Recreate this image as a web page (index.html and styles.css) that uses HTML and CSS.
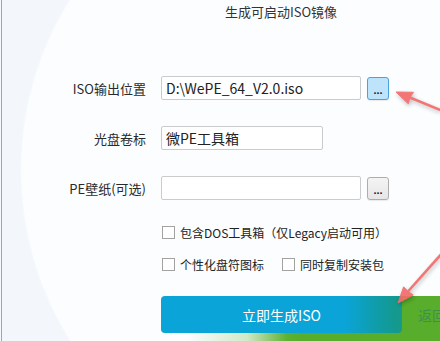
FILE: index.html
```html
<!DOCTYPE html>
<html lang="zh-CN">
<head>
<meta charset="utf-8">
<title>生成可启动ISO镜像</title>
<link rel="stylesheet" href="styles.css">
</head>
<body>
<div class="window">
  <div class="content">
    <h1 class="title">生成可启动ISO镜像</h1>
    <div class="row row-first">
      <label class="label">ISO输出位置</label>
      <div class="input input-wide">D:\WePE_64_V2.0.iso</div>
      <button class="browse browse-active">...</button>
    </div>
    <div class="row">
      <label class="label">光盘卷标</label>
      <div class="input input-short">微PE工具箱</div>
    </div>
    <div class="row">
      <label class="label">PE壁纸(可选)</label>
      <div class="input input-wide"></div>
      <button class="browse">...</button>
    </div>
    <div class="check-row check-row-first">
      <span class="check"><span class="box"></span>包含DOS工具箱（仅Legacy启动可用）</span>
    </div>
    <div class="check-row">
      <span class="check check-gap"><span class="box"></span>个性化盘符图标</span>
      <span class="check"><span class="box"></span>同时复制安装包</span>
    </div>
    <div class="actions">
      <button class="primary">立即生成ISO</button>
      <button class="secondary">返回</button>
    </div>
  </div>
  <svg class="arrows" width="440" height="341" viewBox="0 0 440 341">
    <g fill="#f26b6b" stroke="#f26b6b" stroke-linejoin="round">
      <line x1="405" y1="95.5" x2="444" y2="111.5" stroke-width="2.6"/>
      <polygon points="396,92 413.5,92.3 409.8,97.6 408.3,103.8" stroke-width="1"/>
      <line x1="404" y1="296" x2="444" y2="251" stroke-width="2.6"/>
      <polygon points="398,303 403.6,286.8 408.2,291.5 413.2,295" stroke-width="1"/>
    </g>
  </svg>
</div>
</body>
</html>
```

FILE: styles.css
```css
* { box-sizing: border-box; }

html, body {
  margin: 0;
  padding: 0;
  background: #f5f9fc;
}

body {
  font-family: "Noto Sans CJK SC", "Noto Sans", sans-serif;
  color: #333;
}

.window {
  position: relative;
  width: 439px;
  height: 341px;
  margin-left: 1px;
  border-left: 1px solid #a3a6a9;
  overflow: hidden;
  background: radial-gradient(circle at 340px 170px, #fbfdff 0, #fbfdff 320px, #f3f7fb 322px);
}

.content {
  display: flex;
  flex-direction: column;
}

.title {
  margin: 0 0 0 159px;
  width: 240px;
  height: 24px;
  line-height: 24px;
  font-size: 13px;
  font-weight: normal;
  text-align: center;
  color: #333;
}

.row {
  display: flex;
  align-items: center;
  height: 24px;
  margin-top: 26px;
}

.row-first {
  margin-top: 52px;
}

.label {
  width: 144px;
  margin-right: 15px;
  text-align: right;
  font-size: 13px;
  color: #2a2a2a;
}

.input {
  height: 24px;
  line-height: 22px;
  padding-left: 4px;
  background: #fff;
  border: 1px solid #c9cbcd;
  border-radius: 2px;
  font-size: 14px;
  color: #222;
}

.input-wide { width: 200px; }
.input-short { width: 162px; }

.browse {
  width: 22px;
  height: 23px;
  margin-left: 6px;
  padding: 0 0 3px;
  border: 1px solid #adadad;
  border-radius: 3px;
  background: linear-gradient(#f4f4f4, #e6e6e6);
  font-family: "Liberation Sans", sans-serif;
  font-size: 11px;
  font-weight: bold;
  line-height: 1;
  color: #222;
  display: flex;
  align-items: flex-end;
  justify-content: center;
  box-shadow: 0 1px 1px rgba(0,0,0,0.08);
}

.browse-active {
  background: #bde4fb;
  border-color: #4aa3de;
}

.check-row {
  display: flex;
  align-items: center;
  height: 24px;
  margin-top: 8px;
  padding-left: 160px;
  font-size: 12px;
  color: #222;
}

.check-row-first {
  margin-top: 20px;
}

.check {
  display: flex;
  align-items: center;
}

.check-gap {
  margin-right: 18px;
}

.box {
  width: 13px;
  height: 13px;
  margin-right: 5px;
  background: #fff;
  border: 1px solid #a2a2a2;
}

.actions {
  display: flex;
  align-items: flex-start;
  margin-top: 20px;
  height: 46px;
  padding-left: 159px;
  background: linear-gradient(to right, rgba(120,190,80,0) 185px, rgba(130,195,95,0.35) 245px, #5eb132 285px, #58ad2c 300px);
}

.primary {
  flex: none;
  width: 241px;
  height: 37px;
  border: none;
  border-radius: 4px;
  background: linear-gradient(to right, #0aa4d9 0, #0aa4d9 76%, #13998f 97%, #159a8a 100%);
  color: #fff;
  font-family: "Noto Sans CJK SC", sans-serif;
  font-size: 14px;
  padding: 0;
}

.secondary {
  flex: none;
  height: 37px;
  margin-left: 16px;
  padding: 0;
  border: none;
  background: transparent;
  color: rgba(40, 125, 95, 0.6);
  font-family: "Noto Sans CJK SC", sans-serif;
  font-size: 14px;
  white-space: nowrap;
}

.arrows {
  position: absolute;
  left: -2px;
  top: 0;
  pointer-events: none;
  opacity: 0.92;
  filter: drop-shadow(1px 2px 2px rgba(0,0,0,0.28));
}
```
